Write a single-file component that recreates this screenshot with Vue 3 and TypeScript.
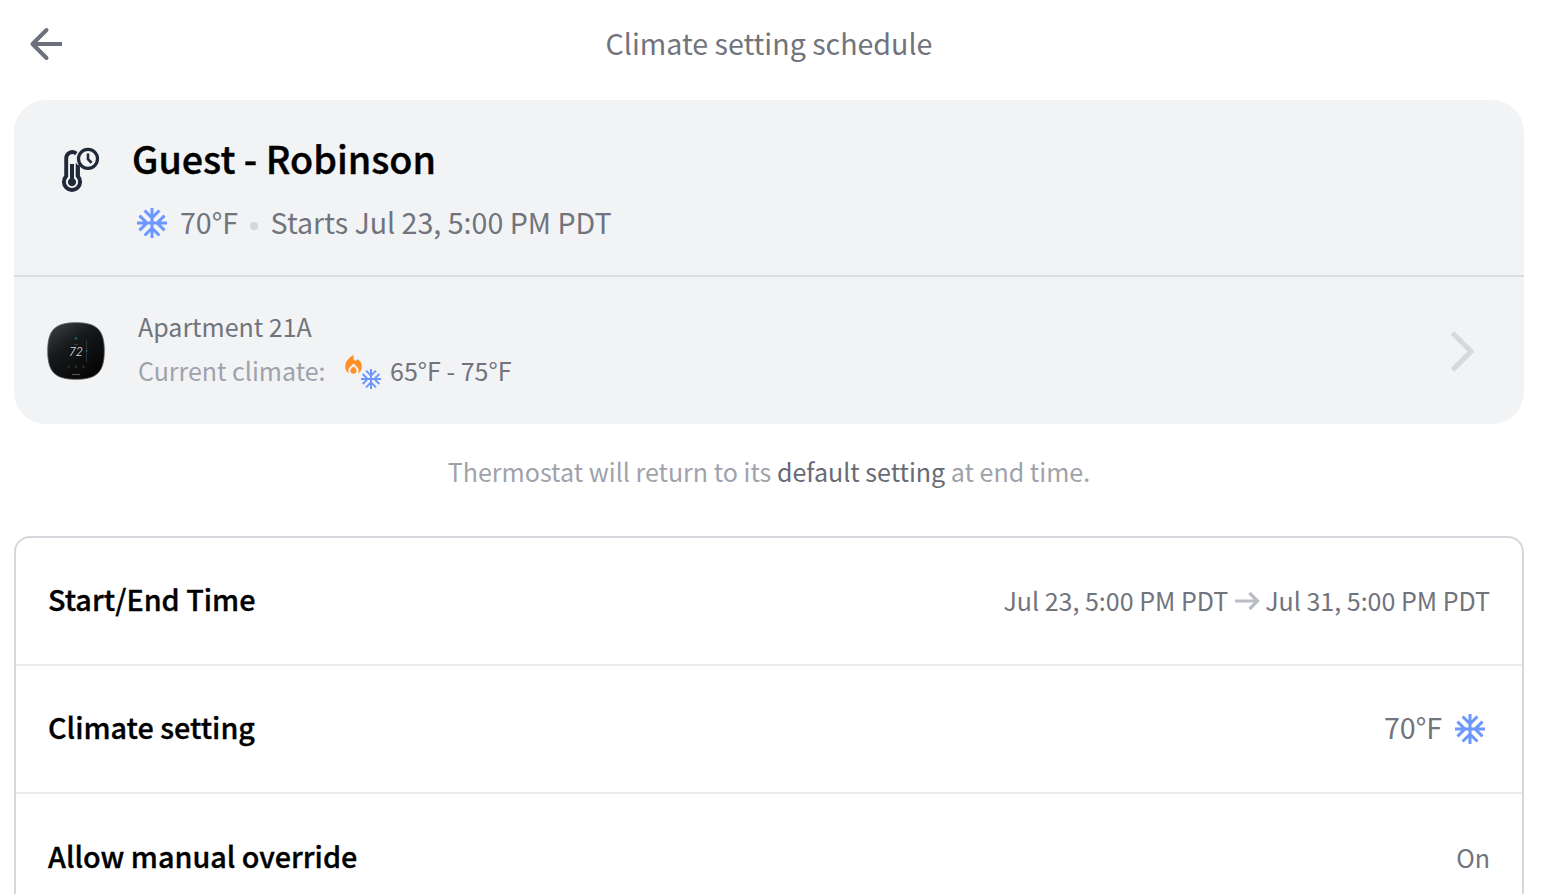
<script setup lang="ts">
interface DetailRow {
  label: string
  kind: 'range' | 'climate' | 'text'
  value: string
  end?: string
}

const rows: DetailRow[] = [
  { label: 'Start/End Time', kind: 'range', value: 'Jul 23, 5:00 PM PDT', end: 'Jul 31, 5:00 PM PDT' },
  { label: 'Climate setting', kind: 'climate', value: '70°F' },
  { label: 'Allow manual override', kind: 'text', value: 'On' },
]

const snowflake =
  'M22 11h-4.17l3.24-3.24-1.41-1.42L15 11h-2V9l4.66-4.66-1.42-1.41L13 6.17V2h-2v4.17L7.76 2.93 6.34 4.34 11 9v2H9L4.34 6.34 2.93 7.76 6.17 11H2v2h4.17l-3.24 3.24 1.41 1.42L9 13h2v2l-4.66 4.66 1.42 1.41L11 17.83V22h2v-4.17l3.24 3.24 1.42-1.41L13 15v-2h2l4.66 4.66 1.41-1.42L17.83 13H22z'
const flame =
  'M12 12.9l-2.13 2.09C9.31 15.55 9 16.28 9 17.06 9 18.68 10.35 20 12 20s3-1.32 3-2.94c0-.78-.31-1.52-.87-2.07L12 12.9z M16 6l-.44.55C14.38 8.02 12 7.19 12 5.3V2S4 6 4 13c0 2.92 1.56 5.47 3.89 6.86-.56-.79-.89-1.76-.89-2.8 0-1.32.52-2.56 1.47-3.5L12 10.1l3.53 3.47c.95.93 1.47 2.17 1.47 3.5 0 1.02-.31 1.96-.85 2.75 1.89-1.15 3.29-3.06 3.71-5.3.66-3.55-1.07-6.9-3.86-8.52z'
</script>

<template>
  <main class="page">
    <header class="bar">
      <svg class="back" width="34" height="34" viewBox="0 0 34 34">
        <path d="M33 17H4" />
        <path class="head" d="M17.500 3L3.500 17l14 14" />
      </svg>
      <h1 class="title">Climate setting schedule</h1>
    </header>

    <section class="card">
      <div class="summary">
        <svg class="schedule-icon" width="40" height="46" viewBox="0 0 40 46">
          <path class="line" d="M15.300 6.600C11 3.200 5.200 6 5.200 11.300V29.200A8.100 8.100 0 1 0 16.800 29.200V18" />
          <path class="solid" d="M14.800 15.800L18.800 20.300V29.500H14.800Z" />
          <path class="solid" d="M9 17h4v14.500a4.100 4.100 0 1 1-4 0z" />
          <circle class="line ring" cx="27" cy="11.800" r="9.500" />
          <path class="line hand" d="M27 6.500v5.800l3.600 3.400" />
        </svg>
        <div class="summary-text">
          <h2 class="name">Guest - Robinson</h2>
          <div class="meta">
            <svg class="snow" width="36" height="36" viewBox="0 0 24 24"><path :d="snowflake" /></svg>
            <span class="temp">70°F</span>
            <span class="dot"></span>
            <span class="starts">Starts Jul 23, 5:00 PM PDT</span>
          </div>
        </div>
      </div>

      <div class="device">
        <svg class="thermostat" width="60" height="60" viewBox="0 0 60 60">
          <defs>
            <linearGradient id="shell" x1="0" y1="0" x2="0.7" y2="1">
              <stop offset="0" stop-color="#404548" />
              <stop offset="0.45" stop-color="#16181a" />
              <stop offset="1" stop-color="#050505" />
            </linearGradient>
          </defs>
          <path
            d="M30 1.700C51 1.700 58.300 9 58.300 30S51 58.300 30 58.300 1.700 51 1.700 30 9 1.700 30 1.700Z"
            fill="url(#shell)"
            stroke="#5a5c5d"
            stroke-width="0.800"
          />
          <circle cx="30" cy="17.500" r="1.300" fill="#126078" />
          <path d="M28 23.500h4" stroke="#444" stroke-width="0.800" />
          <path d="M40.500 19v22" stroke="#29434b" stroke-width="0.700" />
          <circle cx="40.500" cy="30" r="1" fill="#126078" />
          <text x="30" y="35" text-anchor="middle">72</text>
          <g fill="#29292a"><circle cx="22.500" cy="46" r="1.400" /><circle cx="30" cy="46" r="1.400" /><circle cx="37.500" cy="46" r="1.400" /></g>
          <path d="M26 53.500h8" stroke="#555" stroke-width="1.200" />
        </svg>
        <div class="device-text">
          <div class="device-name">Apartment 21A</div>
          <div class="current">
            <span class="current-label">Current climate:</span>
            <span class="modes">
              <svg class="fire" width="25" height="25" viewBox="0 0 24 24"><path :d="flame" /></svg>
              <svg class="snow" width="24" height="24" viewBox="0 0 24 24"><path :d="snowflake" /></svg>
            </span>
            <span class="range">65°F - 75°F</span>
          </div>
        </div>
        <svg class="chevron" width="28" height="44" viewBox="0 0 28 44"><path d="M3.500 4L22 22.500 3.500 41" /></svg>
      </div>
    </section>

    <p class="note">Thermostat will return to its <b>default setting</b> at end time.</p>

    <section class="details">
      <div v-for="row in rows" :key="row.label" class="row">
        <h3 class="label">{{ row.label }}</h3>
        <div class="value" :class="row.kind">
          <span>{{ row.value }}</span>
          <template v-if="row.kind === 'range'">
            <svg class="arrow" width="26" height="22" viewBox="0 0 26 22"><path d="M1 11H23M15.500 3L23.500 11l-8 8" /></svg>
            <span>{{ row.end }}</span>
          </template>
          <svg v-if="row.kind === 'climate'" class="snow" width="36" height="36" viewBox="0 0 24 24"><path :d="snowflake" /></svg>
        </div>
      </div>
    </section>
  </main>
</template>

<style>
body {
  background: #fff;
  overflow: hidden;
}
</style>

<style scoped>
.page {
  box-sizing: border-box;
  height: 894px;
  overflow: hidden;
  padding: 0 22px 0 14px;
  font-family: "Noto Sans CJK SC", "Noto Sans", sans-serif;
  color: #71737d;
}
h1, h2, h3, p { margin: 0; }
svg { display: block; flex: none; }
.bar {
  display: grid;
  grid-template-columns: 50px 1fr 50px;
  align-items: center;
  height: 88px;
  margin-bottom: 12px;
}
.back { margin-left: 15px; }
.back path { fill: none; stroke: #6d6f7b; stroke-width: 4; stroke-linejoin: round; }
.back .head { stroke-linecap: round; }
.title { padding-bottom: 2px; text-align: center; font-size: 28.600px; line-height: 40px; font-weight: 400; white-space: nowrap; }
.card { border-radius: 32px; background: #f1f3f5; }
.summary {
  box-sizing: border-box;
  display: flex;
  height: 177px;
  padding: 34px 47px 0;
  border-bottom: 2px solid #dadcdf;
}
.schedule-icon { margin-top: 13px; }
.line { fill: none; stroke: #20293a; stroke-width: 3.900; }
.ring { stroke-width: 3.200; }
.hand { stroke-width: 2.600; }
.solid { fill: #20293a; }
.summary-text { margin-left: 31px; }
.name { font-size: 37.700px; line-height: 48px; font-weight: 500; color: #000; white-space: nowrap; -webkit-text-stroke: 0.400px #000; }
.meta { display: flex; align-items: center; height: 40px; margin: 20px 0 0 2px; font-size: 28.600px; line-height: 40px; white-space: nowrap; }
.meta .snow { margin-top: 2px; }
.snow { fill: #6b97ff; }
.temp { margin-left: 10px; }
.dot { width: 8px; height: 8px; margin: 7px 12.500px 0 12px; border-radius: 50%; background: #d4d6db; }
.device { display: flex; align-items: center; height: 147px; padding: 0 47px 0 32px; }
.thermostat text { fill: #d9dcde; font: italic 300 11.500px Inter, sans-serif; }
.device-text { flex: 1; margin: 0 0 6px 32px; font-size: 25px; line-height: 44px; }
.current { display: flex; height: 44px; white-space: nowrap; }
.current-label { color: #a0a2ab; }
.modes { display: flex; margin-left: 15px; }
.fire { margin-top: 5px; fill: #ff9025; }
.modes .snow { margin: 19px 0 0 -7px; }
.range { margin-left: 7.500px; }
.chevron path { fill: none; stroke: #d5d8dc; stroke-width: 5; }
.note { margin-top: 27px; text-align: center; font-size: 25.040px; line-height: 40px; color: #a0a2ab; }
.note b { font-weight: 400; color: #686a74; }
.details { margin-top: 45px; border: 2px solid #d4d7dc; border-radius: 16px; }
.row { display: flex; align-items: center; justify-content: space-between; height: 126px; padding: 0 32px; border-bottom: 2px solid #ebecee; }
.label { padding-bottom: 5px; font-size: 28.750px; line-height: 40px; font-weight: 500; color: #000; -webkit-text-stroke: 0.350px #000; }
.row:last-child .label { padding-bottom: 3px; }
.value { display: flex; align-items: center; font-size: 25px; line-height: 40px; white-space: nowrap; }
.value.range { margin: 0; padding-bottom: 2px; }
.value.climate { padding: 0 2px 0 0; font-size: 28.600px; }
.climate span { padding-bottom: 5px; }
.climate .snow { margin-left: 10px; }
.arrow { margin: 2px 5.500px 0; }
.arrow path { fill: none; stroke: #b9bdc4; stroke-width: 3.200; }
</style>
